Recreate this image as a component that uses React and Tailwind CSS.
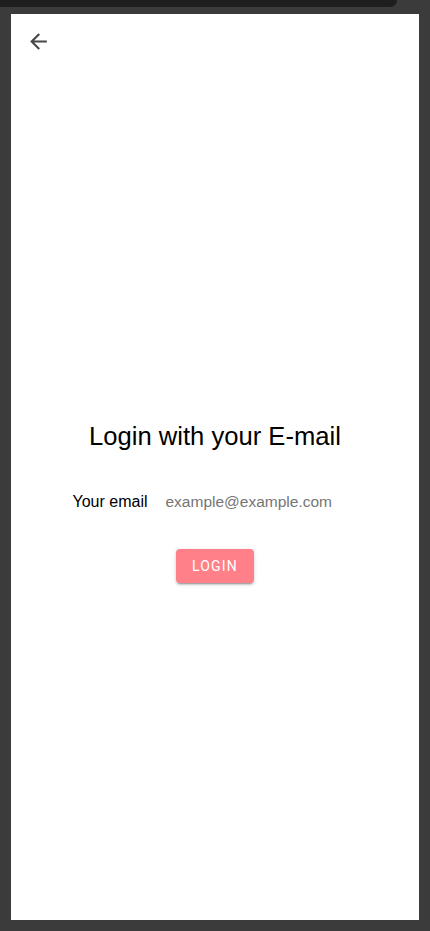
import React from "react";

export default function App() {
  return (
    <div className="h-[931px] w-[430px] bg-[#3b3b3b] overflow-hidden" style={{ fontFamily: '"Liberation Sans", Arial, sans-serif' }}>
      <div className="h-[7px] w-[397px] rounded-br-[8px] bg-[#1e1e1e]" />
      <div className="mt-[7px] ml-[11px] h-[906px] w-[408px] bg-white flex flex-col">
        <div className="pt-[15px] pl-[15px] h-[39px]">
          <svg width="25" height="25" viewBox="0 0 24 24" className="block">
            <path fill="#474747" d="M20 11H7.83l5.59-5.59L12 4l-8 8 8 8 1.41-1.41L7.83 13H20v-2z" />
          </svg>
        </div>
        <div className="mt-[369px] flex flex-col items-center">
          <h1 className="text-[25.6px] leading-[28px] text-black font-normal">Login with your E-mail</h1>
          <div className="mt-[40px] flex items-center h-[24px] gap-[18px] pr-[1px]">
            <span className="text-[16px] leading-[24px] text-black">Your email</span>
            <input
              type="email"
              placeholder="example@example.com"
              className="w-[191px] text-[15.5px] leading-[24px] outline-none bg-transparent placeholder:text-[#757575] p-0"
              style={{ fontFamily: '"Liberation Sans", Arial, sans-serif' }}
            />
          </div>
          <button
            className="mt-[35px] h-[34px] w-[78px] rounded-[4px] bg-[#ff8088] text-white text-[14px] font-normal tracking-[1.2px] uppercase shadow-[0_3px_1px_-2px_rgba(0,0,0,0.2),0_2px_2px_0_rgba(0,0,0,0.14),0_1px_5px_0_rgba(0,0,0,0.12)]"
            style={{ fontFamily: 'Roboto, "Liberation Sans", sans-serif' }}
          >
            Login
          </button>
        </div>
      </div>
    </div>
  );
}
